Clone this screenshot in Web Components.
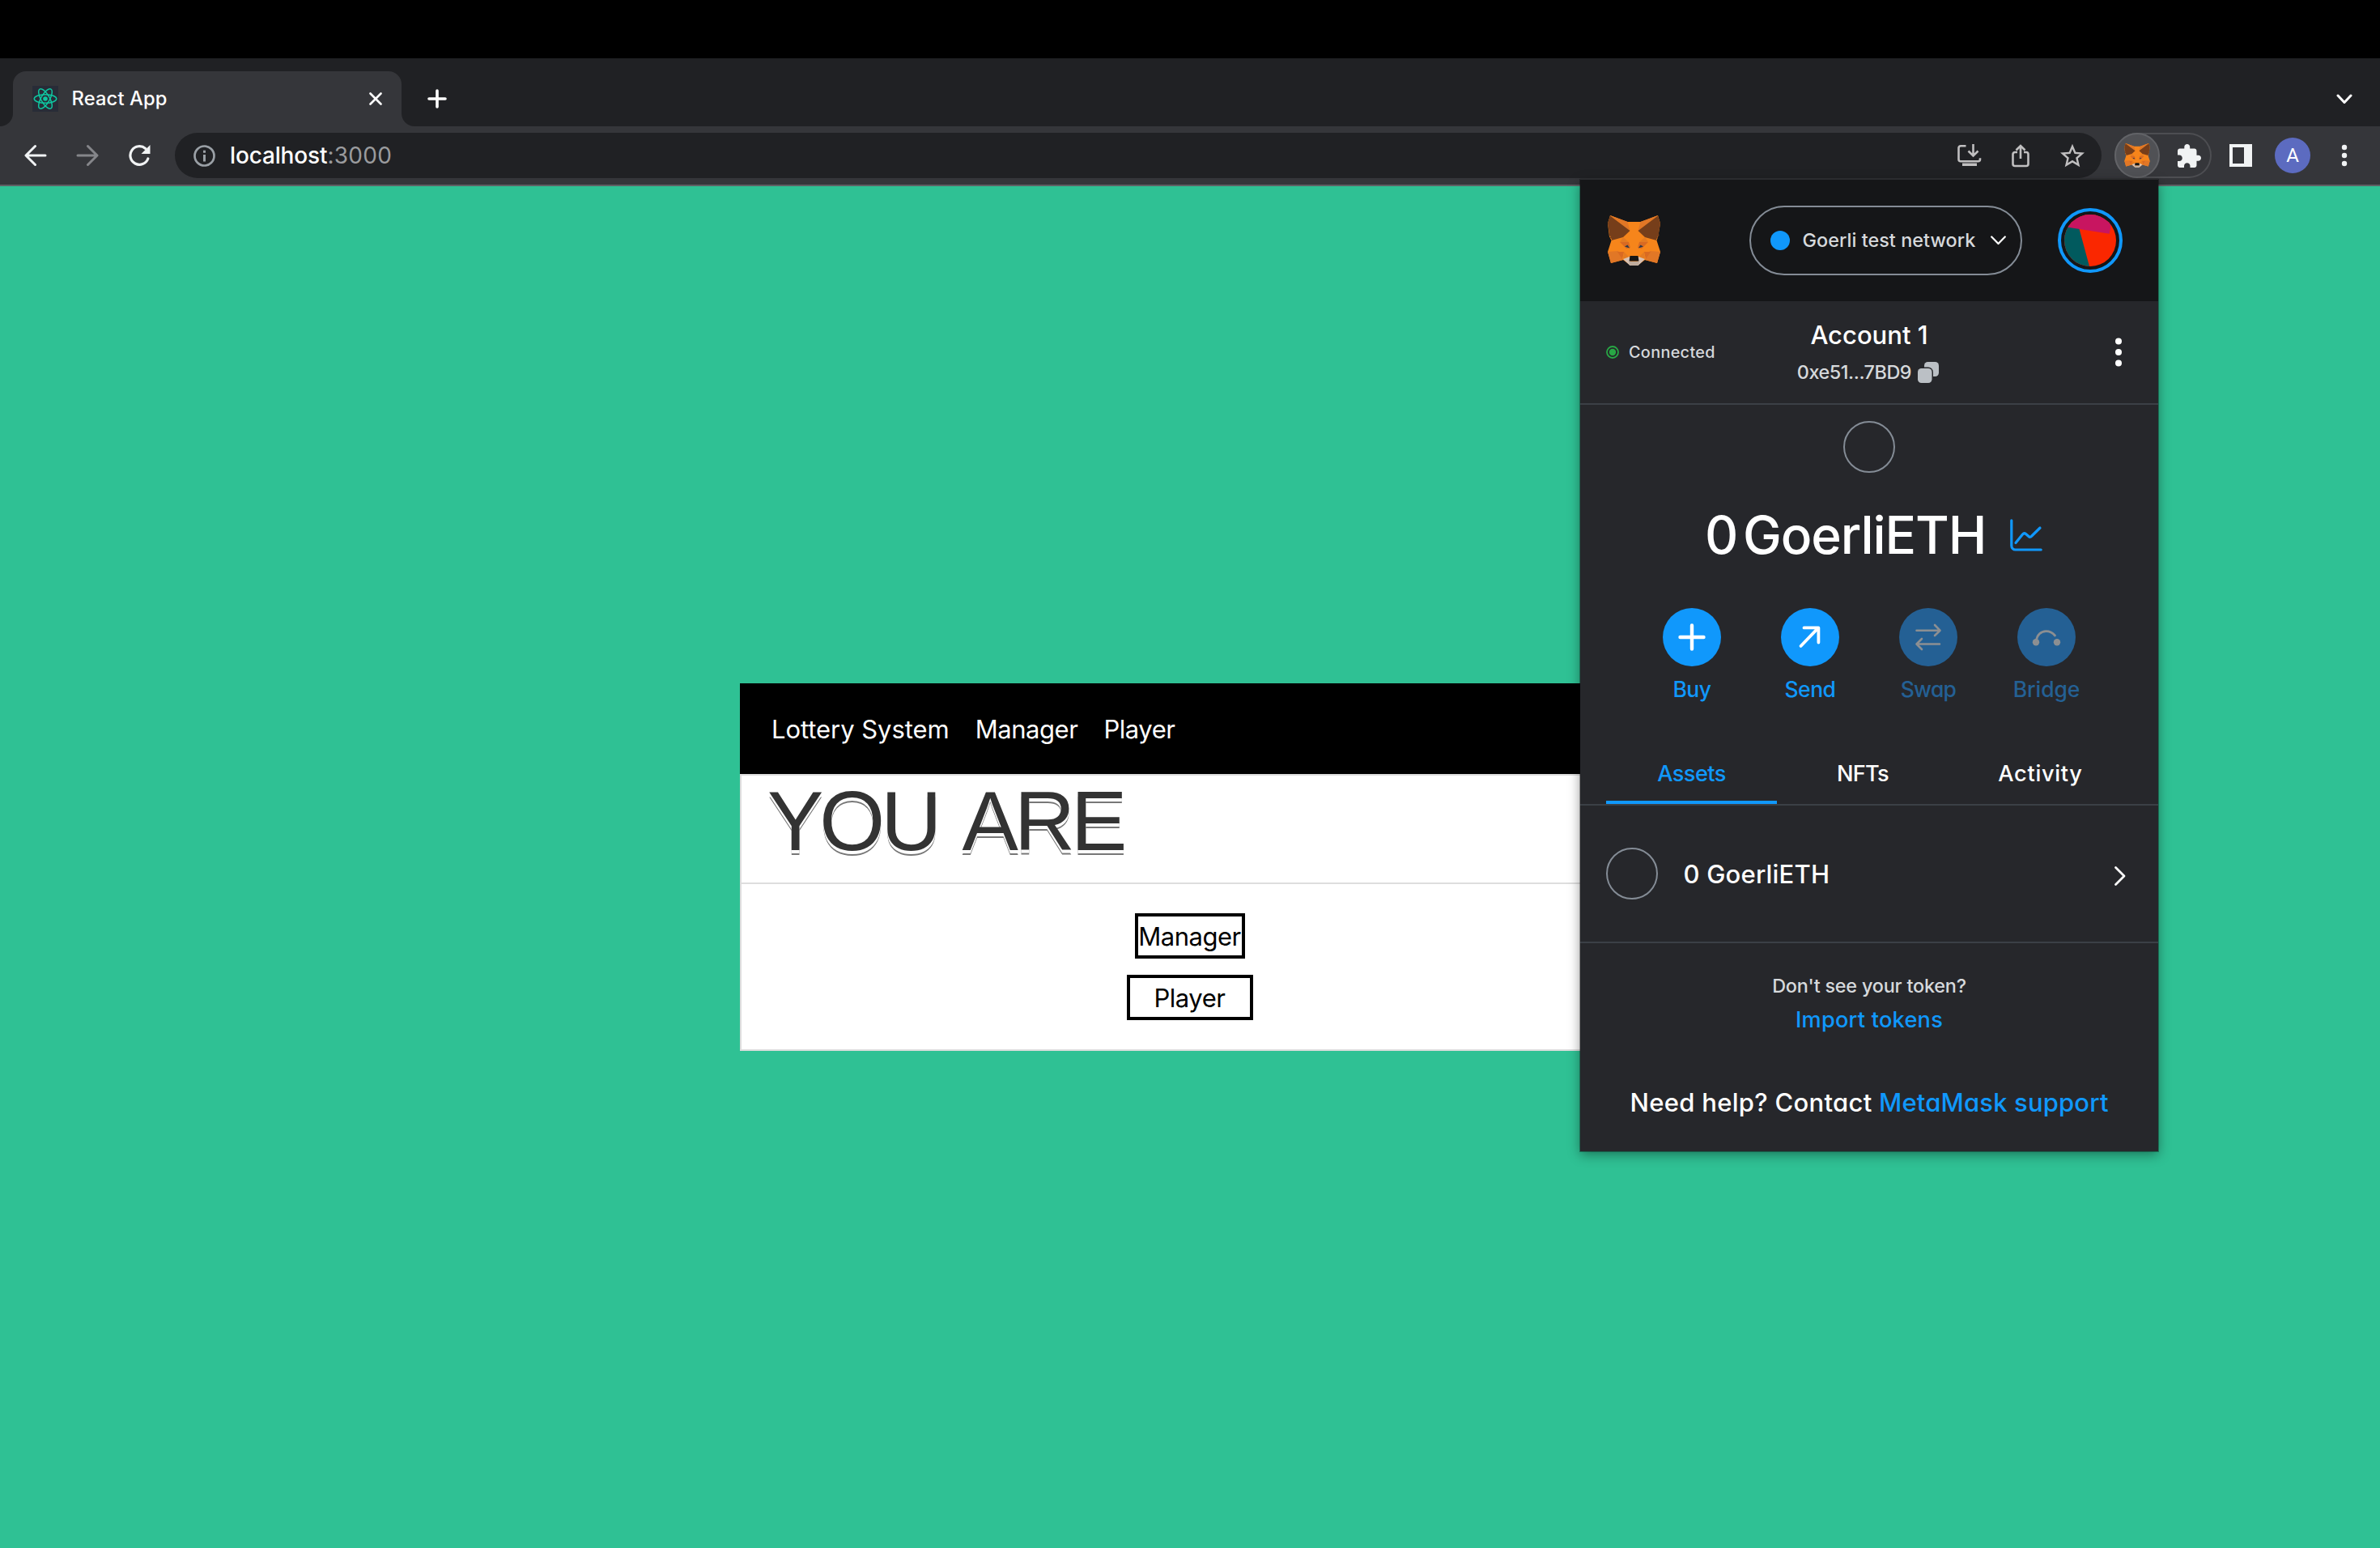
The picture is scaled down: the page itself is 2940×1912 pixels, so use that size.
<!DOCTYPE html>
<html lang="en">
<head>
<meta charset="utf-8">
<title>React App</title>
<style>
html,body{margin:0;padding:0;background:#000}
body{width:2940px;height:1912px;overflow:hidden;font-family:Inter,Roboto,sans-serif;-webkit-font-smoothing:antialiased}
</style>
</head>
<body>
<browser-window>
  <tab-strip slot="tabs"></tab-strip>
  <nav-toolbar slot="toolbar"></nav-toolbar>
  <lottery-page slot="page"></lottery-page>
  <wallet-popup slot="popup">
    <wallet-action label="Buy" spacing="-0.5px"><svg width="72" height="72" fill="none" stroke="#fff" stroke-width="4.4" stroke-linecap="round"><path d="M36 21.5v29M21.5 36h29"/></svg></wallet-action>
    <wallet-action label="Send" spacing="-0.5px"><svg width="72" height="72" fill="none" stroke="#fff" stroke-width="3.8" stroke-linecap="round" stroke-linejoin="round"><path d="M24.5 47L46 24.6M28.5 24.4H46.4V42.5"/></svg></wallet-action>
    <wallet-action label="Swap" spacing="-0.7px" disabled><svg width="72" height="72" fill="none" stroke="#8c8f92" stroke-width="2.6" stroke-linecap="round" stroke-linejoin="round"><path d="M21.500 27.700H50M44 21l6.500 6.700-6.500 6.300M50 44.500H21.500M28 38l-6.500 6.500 6.500 6.500"/></svg></wallet-action>
    <wallet-action label="Bridge" spacing="-0.1px" disabled><svg width="72" height="72"><path d="M23.500 41C24 33 29.500 28.600 35.500 28.600C40.500 28.600 44 31 46.500 34" fill="none" stroke="#8c8f92" stroke-width="2.8" stroke-linecap="round"/><circle cx="23" cy="42.300" r="4.200" fill="#8c8f92"/><circle cx="49" cy="42.300" r="4.200" fill="#8c8f92"/></svg></wallet-action>
  </wallet-popup>
</browser-window>
<script>
function define(name, html) {
  customElements.define(name, class extends HTMLElement {
    connectedCallback() {
      if (this.shadowRoot) return;
      const t = document.createElement('template');
      t.innerHTML = typeof html === 'function' ? html(this) : html;
      this.attachShadow({mode: 'open'}).append(t.content.cloneNode(true));
    }
  });
}

define('browser-window', `
<style>
:host{display:flex;flex-direction:column;position:relative;width:2940px;height:1912px;box-sizing:border-box;padding-top:72px;background:#000}
slot[name=popup]::slotted(*){position:absolute;left:1952px;top:222px}
</style>
<slot name="tabs"></slot><slot name="toolbar"></slot><slot name="page"></slot><slot name="popup"></slot>`);

define('tab-strip', `
<style>
:host{display:flex;height:84px;background:#202124;align-items:flex-end}
.flare{width:16px;height:16px}
.l{background:radial-gradient(circle at 0 0,transparent 15.5px,#35363a 16.5px)}
.r{background:radial-gradient(circle at 100% 0,transparent 15.5px,#35363a 16.5px)}
.tab{box-sizing:border-box;width:480px;height:68px;padding:0 24px;border-radius:16px 16px 0 0;background:#35363a;display:flex;align-items:center}
.title{color:#fff;font-size:23.700px;font-weight:450;line-height:32px;letter-spacing:.150px;margin-left:16.500px;flex:1;white-space:nowrap}
.plus{margin:0 0 22px 16px}
.down{margin:0 34px 27px auto}
svg{display:block;flex:none}
</style>
<span class="flare l"></span>
<div class="tab">
  <svg width="32" height="32"><rect width="32" height="32" fill="#282c37"/><g fill="none" stroke="#0fc6a0" stroke-width="1.500" transform="translate(16 16)"><ellipse rx="13.800" ry="5.300"/><ellipse rx="13.800" ry="5.300" transform="rotate(60)"/><ellipse rx="13.800" ry="5.300" transform="rotate(120)"/><circle r="2.800" fill="#0fc6a0" stroke="none"/></g></svg>
  <span class="title">React App</span>
  <svg width="16" height="16" fill="none" stroke="#fff" stroke-width="2.600" stroke-linecap="round"><path d="M1.500 1.500l13 13M14.500 1.500l-13 13"/></svg>
</div>
<span class="flare r"></span>
<svg class="plus" width="24" height="24" fill="none" stroke="#fff" stroke-width="3.600" stroke-linecap="round"><path d="M12 2v20M2 12h20"/></svg>
<svg class="down" width="20" height="13" fill="none" stroke="#fff" stroke-width="3" stroke-linecap="round" stroke-linejoin="round"><path d="M2 2l8 8.500L18 2"/></svg>
`);

define('fox-logo', `
<style>:host{display:block;width:65px;height:62px}svg{display:block;width:100%;height:100%}</style>
<svg viewBox="0 0 65 62">
<path fill="#f6851b" d="M3 0l21.500 8h16L62 0l3 10-3 17-1.500 4L65 45l-4 14-15-4-8 6H27l-8-6-15 4L0 45l4.500-14L2 26 0 10z"/>
<path fill="#e17726" d="M3 0l21.500 8 3 11zM62 0L40.500 8l-3 11zM0 45l13-1 6 11-15 4zM65 45l-13-1-6 11 15 4z"/>
<path fill="#763e1a" d="M3 .500L27.500 19 19 27 4.500 31l.500-2-2-1 .500-2-2-1 .500-3L0 10zM62 .500L37.500 19 46 27l14.500 4-.500-2 2-1-.500-2 2-1-.500-3L65 10z"/>
<path fill="#d96a22" d="M15 33h11l2 7-5 1zM50 33H39l-2 7 5 1zM12 45h8l-2 9zM53 45h-8l2 9z"/>
<path fill="#e47b22" d="M19 27l7 6H15zM46 27l-7 6h11zM20 45l6 6-7 3zM45 45l-6 6 7 3z"/>
<path fill="#2b3a4c" d="M21 38.500l3.500-2 2.500 4zM44 38.500l-3.500-2-2.500 4z"/>
<path fill="#d7c1b3" d="M19 54l8-3 1 6-1 4.500zM46 54l-8-3-1 6 1 4.500z"/>
<path fill="#c0ad9e" d="M26 57h13l-1 5H27z"/>
<path fill="#161616" d="M27.500 50h10l1 6.500h-12z"/>
</svg>`);

define('nav-toolbar', `
<style>
:host{display:flex;box-sizing:border-box;height:74px;border-bottom:2px solid #5f6064;background:#35363a;align-items:center;padding:0 40px 0 30px}
svg{display:block;flex:none}
.g{margin-left:36px}
.bar{flex:1;height:56px;border-radius:28px;background:#202124;margin-left:30px;display:flex;align-items:center;padding:0 21px 0 23px}
.url{flex:1;margin-left:18px;font-size:28px;line-height:40px;color:#9a9b9e;white-space:nowrap;letter-spacing:.3px}
.url b{font-weight:450;color:#fff;letter-spacing:-.150px}
.ext{box-sizing:border-box;width:120px;height:56px;border-radius:28px;box-shadow:inset 0 0 0 2px #4d4e52;margin-left:16px;display:flex;align-items:center}
.fox{box-sizing:border-box;width:56px;height:56px;border-radius:50%;background:#505155;border:2px solid #626367;display:flex;align-items:center;justify-content:center}
fox-logo{width:32px;height:30px}
.av{width:44px;height:44px;border-radius:50%;background:#5c6bc0;color:#fff;font:24px/45px Roboto,sans-serif;text-align:center;margin-left:28px}
</style>
<svg width="28" height="28" fill="none" stroke="#f1f3f4" stroke-width="3" stroke-linecap="round" stroke-linejoin="round"><path d="M26 14H2.500M13.500 2.500L2 14l11.500 11.500"/></svg>
<svg class="g" width="28" height="28" fill="none" stroke="#85868a" stroke-width="3" stroke-linecap="round" stroke-linejoin="round"><path d="M2 14h23.500M14.500 2.500L26 14 14.500 25.500"/></svg>
<svg class="g" width="28" height="28"><path d="M21.700 5.500A11.300 11.300 0 1 0 24.800 18" fill="none" stroke="#f1f3f4" stroke-width="3.200" stroke-linecap="round"/><path d="M27.500 1v11h-11z" fill="#f1f3f4"/></svg>
<div class="bar">
  <svg width="27" height="27"><circle cx="13.500" cy="13.500" r="12" fill="none" stroke="#9aa0a6" stroke-width="2.700"/><path d="M12 12h3v8.500h-3zM12 6.800h3v3h-3z" fill="#9aa0a6"/></svg>
  <span class="url"><b>localhost</b>:3000</span>
  <svg width="30" height="28" fill="none" stroke="#c0bfc0" stroke-width="2.600" style="margin-right:37px"><path d="M10.500 2.300H4a2.500 2.500 0 0 0-2.500 2.500v14a2.500 2.500 0 0 0 2.500 2.500h21.500a2.500 2.500 0 0 0 2.500-2.500v-1.500M19.500 0v14M13.500 8.500l6 6 6-6"/><path d="M6 23.500h18v3.500H6z" fill="#c0bfc0" stroke="none"/></svg>
  <svg width="22" height="29" fill="none" stroke="#c0bfc0" stroke-width="2.600" style="margin-right:38px"><path d="M7 10H4a2.500 2.500 0 0 0-2.500 2.500v12A2.500 2.500 0 0 0 4 27h14a2.500 2.500 0 0 0 2.500-2.500v-12A2.500 2.500 0 0 0 18 10h-3M11 18V2M5.500 7.500L11 2l5.500 5.500"/></svg>
  <svg width="30" height="30" viewBox="2 1.500 20 20" fill="#c0bfc0"><path d="M22 9.240l-7.190-.620L12 2 9.190 8.630 2 9.240l5.460 4.730L5.820 21 12 17.270 18.180 21l-1.630-7.030L22 9.240zM12 15.400l-3.760 2.270 1-4.280-3.320-2.880 4.380-.380L12 6.100l1.710 4.040 4.380.380-3.320 2.880 1 4.280L12 15.400z"/></svg>
</div>
<div class="ext">
  <div class="fox"><fox-logo></fox-logo></div>
  <svg width="29" height="29" viewBox="2 1 21 21" fill="#f1f3f4" style="margin-left:22px"><path d="M20.500 11H19V7c0-1.100-.900-2-2-2h-4V3.500C13 2.120 11.880 1 10.500 1S8 2.120 8 3.500V5H4c-1.100 0-1.990.900-1.990 2v3.800H3.500c1.490 0 2.700 1.210 2.700 2.700s-1.210 2.700-2.700 2.700H2V20c0 1.100.900 2 2 2h3.800v-1.500c0-1.490 1.210-2.700 2.700-2.700 1.490 0 2.700 1.210 2.700 2.700V22H17c1.100 0 2-.900 2-2v-4h1.500c1.380 0 2.500-1.120 2.500-2.500S21.880 11 20.500 11z"/></svg>
</div>
<svg width="28" height="28" style="margin-left:22px"><path fill="#f1f3f4" fill-rule="evenodd" d="M0 0h28v28H0zM4 4v20h14V4z"/></svg>
<span class="av">A</span>
<svg width="8" height="28" fill="#f1f3f4" style="margin-left:38px"><circle cx="4" cy="4" r="3.200"/><circle cx="4" cy="14" r="3.200"/><circle cx="4" cy="24" r="3.200"/></svg>
`);

define('lottery-page', `
<style>
:host{display:flex;flex:1;background:#2fc194;align-items:center;justify-content:center}
.card{width:1112px;background:#fff}
nav{height:112px;background:#000;color:#fff;display:flex;align-items:center;padding-left:39px;font-size:31px;gap:32px;white-space:nowrap}
nav span:first-child{letter-spacing:-.060px}
nav span:nth-child(n+2){letter-spacing:-.450px}
h1{margin:0;box-sizing:border-box;height:136px;border:2px solid #ddd;padding-left:32px;font:400 104px/112px "Liberation Sans",Arial,sans-serif;letter-spacing:-5px;word-spacing:12px;color:#333;text-shadow:0 4px 0 #fff,0 6px 0 #777;white-space:nowrap}
.body{box-sizing:border-box;height:206px;border:2px solid #ddd;border-top:0;display:flex;flex-direction:column;align-items:center;gap:20px;padding-top:36px}
choice-button+choice-button{--w:156px}
</style>
<div class="card">
  <nav><span>Lottery System</span><span>Manager</span><span>Player</span></nav>
  <h1>YOU ARE</h1>
  <div class="body"><choice-button>Manager</choice-button><choice-button>Player</choice-button></div>
</div>`);

define('choice-button', `
<style>
:host{display:flex;box-sizing:border-box;width:var(--w,136px);height:56px;border:4px solid #000;background:#fff;color:#000;align-items:center;justify-content:center;font-size:31px;letter-spacing:-.480px;line-height:40px;padding-top:2px;padding-right:1px}
</style><slot></slot>`);

define('wallet-action', el => `
<style>
:host{display:flex;width:146px;flex-direction:column;align-items:center}
.c{width:72px;height:72px;border-radius:50%;background:#1098fc}
.t{margin-top:14px;font-size:26.500px;line-height:28px;letter-spacing:${el.getAttribute('spacing')};color:#1098fc}
:host([disabled]) .c{background:#246094}
:host([disabled]) .t{color:#246094}
::slotted(svg){display:block}
</style><div class="c"><slot></slot></div><span class="t">${el.getAttribute('label')}</span>`);

define('wallet-popup', `
<style>
:host{display:block;width:714px;height:1200px;background:#26272b;color:#fff;box-shadow:0 -2px 0 #2b2c2f,0 0 0 1px rgba(0,0,0,.3),0 4px 14px rgba(0,0,0,.4);font-weight:450;font-feature-settings:"cv11";white-space:nowrap}
svg{display:block;flex:none}
header{height:150px;background:#151618;display:flex;align-items:center;padding-left:34px}
.net{box-sizing:border-box;width:337px;height:86px;border:2px solid #848c96;border-radius:43px;margin-left:110px;padding:0 18px 0 24px;display:flex;align-items:center}
.dot{width:24px;height:24px;border-radius:50%;background:#1098fc}
.nn{flex:1;margin-left:15.500px;font-size:23.400px;letter-spacing:.050px;color:#d6d9dc;padding-bottom:1px}
.avatar{box-sizing:border-box;width:80px;height:80px;border:4px solid #1098fc;border-radius:50%;padding:4px;margin-left:44px}
.acct{height:126px;border-bottom:2px solid #3b4046;display:grid;grid-template-columns:1fr auto 1fr;align-items:center;padding:0 32px}
.conn{display:flex;align-items:center;font-size:19.800px;letter-spacing:.350px;color:#d6d9dc;gap:12px}
.mid{display:flex;flex-direction:column;align-items:center;padding-top:4px}
.name{font-size:31px;font-weight:550;line-height:46px;letter-spacing:0}
.addr{display:flex;align-items:center;gap:8px;font-size:23.400px;line-height:46px;letter-spacing:-.450px;color:#d6d9dc;padding-right:3px}
.more{justify-self:end;margin-right:13px}
.coin{box-sizing:border-box;width:64px;height:64px;border:2px solid #848c96;border-radius:50%;flex:none}
.top{margin:20px auto 0}
.bal{height:64px;margin-top:45px;padding-left:154px;display:flex;align-items:center;font-size:64px;line-height:64px}
.bal span:first-child{width:47px}
.bal span:nth-child(2){width:330px;letter-spacing:-1.100px}
.actions{display:flex;justify-content:center;margin-top:58px}
.tabs{display:flex;box-sizing:border-box;height:78px;margin-top:52px;padding:0 32px;border-bottom:2px solid #3b4046;font-size:27.200px}
.tabs span{box-sizing:border-box;height:76px;line-height:77px;text-align:center}
.tabs span:nth-child(1){width:211px;color:#1098fc;box-shadow:inset 0 -4px #1098fc;letter-spacing:-.600px}
.tabs span:nth-child(2){width:212px;letter-spacing:-.800px}
.tabs span:nth-child(3){width:227px;letter-spacing:.700px}
.asset{height:168px;border-bottom:2px solid #3b4046;display:flex;align-items:center;padding:0 40px 0 32px}
.asset span{margin-left:31.500px;flex:1;font-size:31px;letter-spacing:.200px}
.asset svg{margin-top:6px}
.foot{display:flex;flex-direction:column;align-items:center;padding-top:33px;line-height:40px}
.q{font-size:23.400px;color:#d6d9dc;letter-spacing:-.200px}
.imp{font-size:27.200px;color:#1098fc;letter-spacing:.220px;margin-top:2px}
.help{font-size:31px;margin-top:62px;letter-spacing:.300px}
.help a{color:#1098fc;letter-spacing:.150px}
</style>
<header>
  <fox-logo></fox-logo>
  <div class="net"><span class="dot"></span><span class="nn">Goerli test network</span><svg width="19" height="12" fill="none" stroke="#fff" stroke-width="2.200" stroke-linecap="round" stroke-linejoin="round"><path d="M1.200 1.500l8.300 8.500 8.300-8.500"/></svg></div>
  <div class="avatar"><svg width="64" height="64"><clipPath id="c"><circle cx="32" cy="32" r="32"/></clipPath><g clip-path="url(#c)"><path fill="#fa2700" d="M0 0h64v64H0z"/><path fill="#015a5e" d="M-4 14.500L18.300 17 31 64H-4z"/><path fill="#c81560" d="M0 15L55.700 23.700 60 0H0z"/></g></svg></div>
</header>
<div class="acct">
  <div class="conn"><svg width="16" height="16"><circle cx="8" cy="8" r="7" fill="none" stroke="#28a745" stroke-width="1.800"/><circle cx="8" cy="8" r="4.200" fill="#28a745"/></svg><span>Connected</span></div>
  <div class="mid"><span class="name">Account 1</span><span class="addr"><span>0xe51...7BD9</span><svg width="26" height="26" fill="#bbc0c5"><rect x="8" width="18" height="18" rx="4.500"/><rect x="-1.500" y="6.500" width="20.500" height="21" rx="6" fill="#26272b"/><rect y="8" width="17.500" height="18" rx="4.500"/></svg></span></div>
  <svg class="more" width="8" height="36" fill="#fff"><circle cx="4" cy="4.500" r="4"/><circle cx="4" cy="18" r="4"/><circle cx="4" cy="31.500" r="4"/></svg>
</div>
<div class="coin top"></div>
<div class="bal"><span>0</span><span>GoerliETH</span><svg width="40" height="40" fill="none" stroke="#1098fc" stroke-width="3.200" stroke-linecap="round" stroke-linejoin="round"><path d="M1.800 1.800V33a5 5 0 0 0 5 5h31.400M7 29.500l8.500-10.500c1.300-1.500 2.600-1.600 4-.500l3.500 3c1.300 1.200 2.700 1 3.800-.500L37 11"/></svg></div>
<div class="actions"><slot></slot></div>
<div class="tabs"><span>Assets</span><span>NFTs</span><span>Activity</span></div>
<div class="asset"><div class="coin"></div><span>0 GoerliETH</span><svg width="15" height="26" fill="none" stroke="#fff" stroke-width="2.800" stroke-linecap="round" stroke-linejoin="round"><path d="M2.500 2.500L13 13 2.500 23.500"/></svg></div>
<div class="foot"><span class="q">Don't see your token?</span><span class="imp">Import tokens</span><span class="help">Need help? Contact <a>MetaMask support</a></span></div>
`);
</script>
</body>
</html>
